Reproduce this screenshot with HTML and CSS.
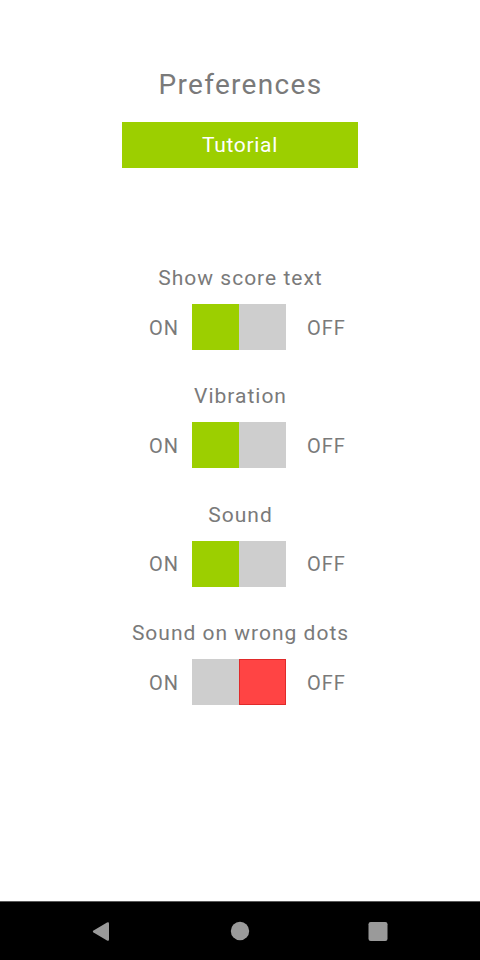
FILE: index.html
```html
<!DOCTYPE html>
<html>
<head>
<meta charset="utf-8">
<link rel="stylesheet" href="styles.css">
</head>
<body>
<main class="screen">
  <h1 class="title">Preferences</h1>
  <button class="tutorial">Tutorial</button>
  <section class="prefs">
    <div class="pref">
      <div class="label">Show score text</div>
      <div class="toggle-row">
        <span class="on">ON</span>
        <div class="switch"><span class="half green"></span><span class="half gray"></span></div>
        <span class="off">OFF</span>
      </div>
    </div>
    <div class="pref">
      <div class="label">Vibration</div>
      <div class="toggle-row">
        <span class="on">ON</span>
        <div class="switch"><span class="half green"></span><span class="half gray"></span></div>
        <span class="off">OFF</span>
      </div>
    </div>
    <div class="pref">
      <div class="label">Sound</div>
      <div class="toggle-row">
        <span class="on">ON</span>
        <div class="switch"><span class="half green"></span><span class="half gray"></span></div>
        <span class="off">OFF</span>
      </div>
    </div>
    <div class="pref">
      <div class="label">Sound on wrong dots</div>
      <div class="toggle-row">
        <span class="on">ON</span>
        <div class="switch"><span class="half gray"></span><span class="half red"></span></div>
        <span class="off">OFF</span>
      </div>
    </div>
  </section>
</main>
<nav class="navbar">
  <svg class="nav-icons" width="480" height="58" viewBox="0 0 480 58">
    <path d="M93.5 28.5 L107 20.5 Q109 19.5 109 21.5 L109 37.5 Q109 39.5 107 38.5 L93.5 30.5 Q92 29.5 93.5 28.5 Z" fill="#9a9a9a"/>
    <circle cx="240" cy="29" r="9.2" fill="#9a9a9a"/>
    <rect x="368.5" y="20" width="19" height="19" rx="2.2" fill="#9a9a9a"/>
  </svg>
</nav>
</body>
</html>
```

FILE: styles.css
```css
html, body {
  margin: 0;
  padding: 0;
  background: #ffffff;
}
body {
  width: 480px;
  height: 960px;
  display: flex;
  flex-direction: column;
  font-family: Roboto, "Liberation Sans", sans-serif;
  color: #7a7a7a;
}
.screen {
  flex: 1;
  display: flex;
  flex-direction: column;
  align-items: center;
  padding-top: 69px;
  box-sizing: border-box;
}
.title {
  margin: 0;
  font-size: 28px;
  line-height: 32px;
  font-weight: 400;
  letter-spacing: 1.3px;
  padding-left: 1px;
  color: #7a7a7a;
}
.tutorial {
  margin-top: 21px;
  width: 236px;
  height: 46px;
  border: none;
  padding: 0;
  background: #9ccf00;
  color: #ffffff;
  font-family: Roboto, "Liberation Sans", sans-serif;
  font-size: 21px;
  letter-spacing: 0.7px;
  display: flex;
  align-items: center;
  justify-content: center;
}
.prefs {
  margin-top: 98px;
  width: 100%;
  display: flex;
  flex-direction: column;
  gap: 34.4px;
}
.pref {
  display: flex;
  flex-direction: column;
  align-items: stretch;
}
.label {
  text-align: center;
  font-size: 21px;
  line-height: 24px;
  letter-spacing: 1px;
  padding-left: 1px;
}
.toggle-row {
  margin-top: 14px;
  display: grid;
  grid-template-columns: 1fr auto 1fr;
  align-items: center;
  font-size: 20px;
  line-height: 24px;
  letter-spacing: 1px;
}
.on {
  justify-self: end;
  padding-right: 13px;
  padding-top: 1px;
}
.off {
  justify-self: start;
  padding-left: 19px;
  padding-top: 1px;
}
.switch {
  display: flex;
  width: 94px;
  height: 46px;
  margin-right: 2px;
}
.half {
  flex: none;
  width: 47px;
  box-sizing: border-box;
}
.green { background: #9ccf00; }
.gray { background: #cecece; }
.red { background: #ff4444; border: 1px solid #e02a2a; }
.navbar {
  height: 59px;
  background: #000000;
  border-top: 1px solid #5a5a5a;
  box-sizing: border-box;
}
.nav-icons {
  display: block;
}
```
